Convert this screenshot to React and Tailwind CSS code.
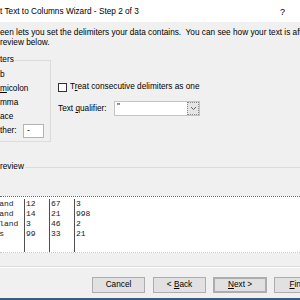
import React from "react";

const COLS = [
  ["England", "Ireland", "Scotland", "Wales"],
  ["12", "14", "3", "99"],
  ["67", "21", "46", "33"],
  ["3", "998", "2", "21"],
];

const Btn = ({ className = "", children }) => (
  <div
    className={
      "shrink-0 h-[16px] flex items-center justify-center bg-[#e1e1e1] border border-[#adadad] " +
      className
    }
  >
    <span className="whitespace-pre">{children}</span>
  </div>
);

export default function App() {
  return (
    <div
      className="w-[300px] h-[300px] overflow-hidden bg-[#f0f0f0] flex flex-col text-[8.25px] leading-[10px] text-black"
      style={{ fontFamily: '"Liberation Sans", Arial, sans-serif' }}
    >
      {/* Title bar */}
      <div className="h-[22px] shrink-0 bg-white flex items-center justify-between pr-[15px] pt-[1px]">
        <span className="whitespace-nowrap">t Text to Columns Wizard - Step 2 of 3</span>
        <span className="text-[9px]">?</span>
      </div>

      {/* Description */}
      <div className="mt-[6px] whitespace-nowrap">
        <div>een lets you set the delimiters your data contains.&nbsp; You can see how your text is affected in the preview below.</div>
        <div>review below.</div>
      </div>

      {/* Delimiters + options */}
      <div className="mt-[7px] flex shrink-0">
        <div className="w-[51px] shrink-0">
          <div className="h-[10px] flex">
            <span className="pr-[1px]">ters</span>
            <div className="flex-1 h-[5px] self-end border-t border-r border-[#dcdcdc]" />
          </div>
          <div className="border-r border-b border-[#dcdcdc] pt-[3px] pb-[3px]">
            <div className="h-[14px] flex items-center">b</div>
            <div className="h-[14px] flex items-center">
              <span>
                <span className="underline">m</span>icolon
              </span>
            </div>
            <div className="h-[14px] flex items-center">mma</div>
            <div className="h-[14px] flex items-center">ace</div>
            <div className="h-[14px] flex items-center">
              <span className="w-[23px]">ther:</span>
              <div className="w-[21px] h-[14px] bg-white border border-[#b4b4b4] flex items-center pl-[3px]">
                -
              </div>
            </div>
          </div>
        </div>

        <div className="ml-[7px]">
          <div className="mt-[27px] h-[10px] flex items-center">
            <div className="w-[9px] h-[9px] bg-white border border-[#333]" />
            <span className="ml-[3px] whitespace-nowrap">
              T<span className="underline">r</span>eat consecutive delimiters as one
            </span>
          </div>
          <div className="mt-[9px] h-[15px] flex items-center">
            <span className="w-[56px] whitespace-nowrap">
              Text <span className="underline">q</span>ualifier:
            </span>
            <div className="w-[86px] h-[15px] bg-white border border-[#c4c4c4] flex">
              <div className="flex-1 pl-[2px] leading-[9px]">"</div>
              <div className="w-[12px] h-full bg-[#e5e5e5] border border-dotted border-[#8a8a8a] flex items-center justify-center">
                <svg width="7" height="5" viewBox="0 0 7 5">
                  <path d="M1 1 L3.5 3.5 L6 1" fill="none" stroke="#606060" strokeWidth="1" />
                </svg>
              </div>
            </div>
          </div>
        </div>
      </div>

      {/* Data preview label */}
      <div className="mt-[20px] h-[10px] flex items-center shrink-0">
        <span className="pr-[1px]">review</span>
        <div className="flex-1 border-t border-[#dcdcdc]" />
      </div>

      {/* Preview box */}
      <div className="mt-[24px] h-[57px] shrink-0 bg-white border-t border-[#6a6a6a] border-b border-b-[#c8c8c8] border-dotted overflow-hidden">
        <div
          className="ml-[-21px] flex h-full text-[8px] leading-[10px] text-[#222] pt-[2px]"
          style={{ fontFamily: '"Liberation Mono", "Courier New", monospace' }}
        >
          {COLS.map((col, i) => (
            <div
              key={i}
              className={
                "shrink-0 border-r border-[#505050] pl-[1px] " +
                (i === 0 ? "w-[46px] pl-0" : i === 3 ? "flex-1 border-r-0" : "w-[25px]")
              }
            >
              {col.map((v, j) => (
                <div key={j} className="whitespace-nowrap">
                  {v}
                </div>
              ))}
            </div>
          ))}
        </div>
      </div>

      {/* Separator */}
      <div className="mt-[13px] shrink-0 border-t border-[#dcdcdc] border-b border-b-white" />

      {/* Buttons */}
      <div className="mt-[9px] flex shrink-0">
        <Btn className="ml-[92px] w-[53px]">Cancel</Btn>
        <Btn className="ml-[8px] w-[53px]">
          {"< "}
          <span className="underline">B</span>ack
        </Btn>
        <Btn className="ml-[7px] w-[54px] border-[#0078d7] border-2">
          <span className="underline">N</span>
          {"ext >"}
        </Btn>
        <Btn className="ml-[7px] w-[53px]">
          <span className="underline">F</span>inish
        </Btn>
      </div>

      <div className="mt-auto h-[2px] shrink-0 bg-[#3b5c80]" />
    </div>
  );
}
